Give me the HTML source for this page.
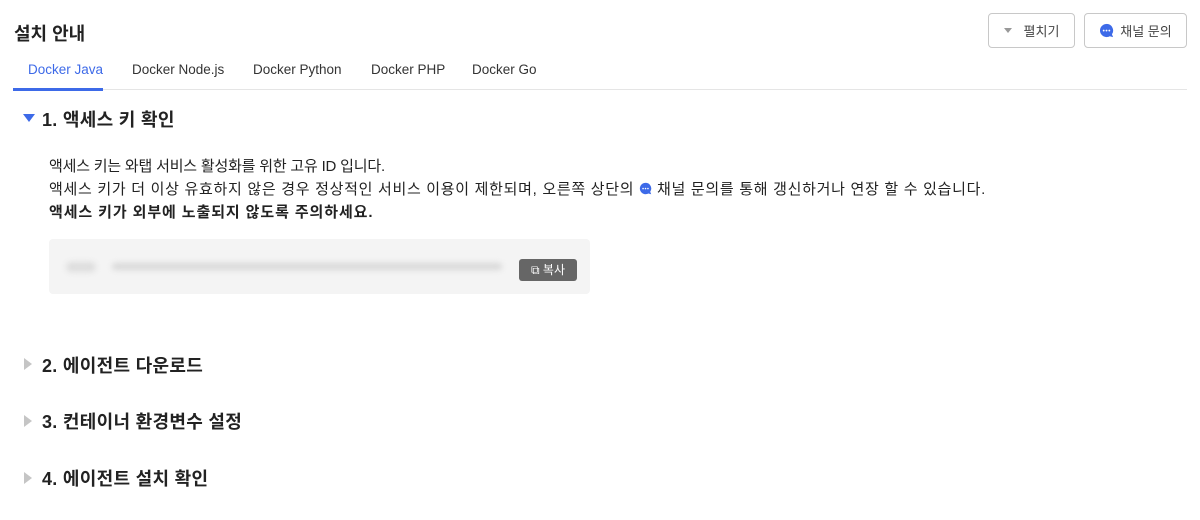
<!DOCTYPE html>
<html><head><meta charset="utf-8"><style>
body{margin:0;width:1200px;height:520px;background:#fff;font-family:"Liberation Sans","Noto Sans CJK KR",sans-serif;color:#222;position:relative;overflow:hidden}
.a{position:absolute;white-space:nowrap}
h1{position:absolute;left:14px;top:20px;margin:0;font-size:18px;font-weight:bold;color:#222}
.btn{position:absolute;top:13px;height:35px;border:1px solid #c8c8c8;border-radius:4px;box-sizing:border-box;font-size:13px;color:#444;display:flex;align-items:center;justify-content:center}
.tab{position:absolute;top:62px;font-size:13.5px;color:#333}
.sec{position:absolute;left:42px;font-size:18px;font-weight:bold;color:#222;letter-spacing:0.3px;white-space:nowrap}
.tri{position:absolute;left:24px;width:0;height:0;border-top:6px solid transparent;border-bottom:6px solid transparent;border-left:8px solid #c5c5c5}
.txt{position:absolute;left:49px;font-size:15px;color:#222;white-space:nowrap}
</style></head><body>
<h1>설치 안내</h1>
<div class="btn" style="left:988px;width:87px"><span style="display:inline-block;border-left:4px solid transparent;border-right:4px solid transparent;border-top:5px solid #999;margin-right:12px"></span>펼치기</div>
<div class="btn" style="left:1084px;width:103px"><svg width="15" height="15" viewBox="0 0 16 16" style="margin-right:6px"><path d="M8 1a7 7 0 1 0 3.5 13.1L15 15l-1.2-3A7 7 0 0 0 8 1z" fill="#3d6ae8"/><circle cx="5" cy="8" r="1" fill="#fff"/><circle cx="8" cy="8" r="1" fill="#fff"/><circle cx="11" cy="8" r="1" fill="#fff"/></svg>채널 문의</div>
<div class="tab" style="left:28px;color:#3d6ae8">Docker Java</div>
<div class="tab" style="left:132px">Docker Node.js</div>
<div class="tab" style="left:253px">Docker Python</div>
<div class="tab" style="left:371px">Docker PHP</div>
<div class="tab" style="left:472px">Docker Go</div>
<div class="a" style="left:13px;top:89px;width:1174px;height:1px;background:#e5e5e5"></div>
<div class="a" style="left:13px;top:88px;width:90px;height:3px;background:#3d6ae8"></div>
<div class="a" style="left:23px;top:114px;border-left:6px solid transparent;border-right:6px solid transparent;border-top:8px solid #3d6ae8;width:0;height:0"></div>
<div class="sec" style="top:106px">1. 액세스 키 확인</div>
<div class="txt" style="top:155px;letter-spacing:-0.2px">액세스 키는 와탭 서비스 활성화를 위한 고유 ID 입니다.</div>
<div class="txt" style="top:178px;letter-spacing:0.7px">액세스 키가 더 이상 유효하지 않은 경우 정상적인 서비스 이용이 제한되며, 오른쪽 상단의 <svg width="13" height="13" viewBox="0 0 16 16" style="vertical-align:-1px"><path d="M8 1a7 7 0 1 0 3.5 13.1L15 15l-1.2-3A7 7 0 0 0 8 1z" fill="#3d6ae8"/><circle cx="5" cy="8" r="1" fill="#fff"/><circle cx="8" cy="8" r="1" fill="#fff"/><circle cx="11" cy="8" r="1" fill="#fff"/></svg> 채널 문의를 통해 갱신하거나 연장 할 수 있습니다.</div>
<div class="txt" style="top:201px;font-weight:bold;letter-spacing:0.9px">액세스 키가 외부에 노출되지 않도록 주의하세요.</div>
<div class="a" style="left:49px;top:239px;width:541px;height:55px;background:#f4f4f4;border-radius:4px"></div>
<div class="a" style="left:66px;top:262px;width:30px;height:10px;background:#ddd;border-radius:5px;filter:blur(3px)"></div>
<div class="a" style="left:112px;top:263px;width:390px;height:7px;background:#d8d8d8;border-radius:4px;filter:blur(3px)"></div>
<div class="a" style="left:519px;top:259px;width:58px;height:22px;background:#666;border-radius:3px;color:#fff;font-size:12px;line-height:22px;text-align:center">⧉ 복사</div>
<div class="tri" style="top:358px"></div><div class="sec" style="top:352px">2. 에이전트 다운로드</div>
<div class="tri" style="top:415px"></div><div class="sec" style="top:408px">3. 컨테이너 환경변수 설정</div>
<div class="tri" style="top:472px"></div><div class="sec" style="top:465px">4. 에이전트 설치 확인</div>
</body></html>
